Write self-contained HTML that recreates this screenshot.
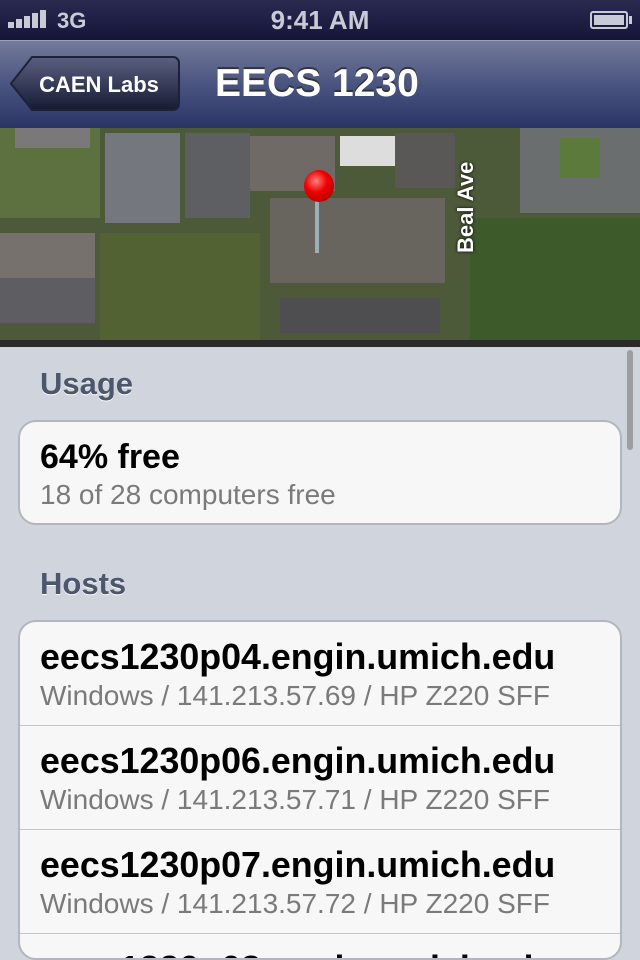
<!DOCTYPE html>
<html><head><meta charset="utf-8"><style>
*{margin:0;padding:0;box-sizing:border-box}
html,body{width:640px;height:960px;overflow:hidden}
body{background:#d0d4dc;font-family:"Liberation Sans",sans-serif;position:relative}
.status{position:absolute;top:0;left:0;width:640px;height:40px;background:linear-gradient(#2a2a50,#15153a);color:#c8cad6;font-weight:bold}
.nav{position:absolute;top:40px;left:0;width:640px;height:88px;background:linear-gradient(#737a9a,#4a5480 50%,#2a3566);border-top:1px solid #9aa0ba}
.back{position:absolute;left:10px;top:14px;width:170px;height:57px}
.title{position:absolute;left:215px;top:21px;color:#fff;font-size:39px;font-weight:bold;text-shadow:0 -2px 0 #333}
.map{position:absolute;top:128px;left:0;width:640px;height:219px;background:#4d5a3a;overflow:hidden}
.map div{position:absolute}
.sec{position:absolute;left:40px;font-size:31px;font-weight:bold;color:#4c566c;text-shadow:0 1px 0 #fff}
.card{position:absolute;left:18px;width:604px;background:#f7f7f7;border:2px solid #b3b6bd;border-radius:18px;overflow:hidden}
.row{height:104px;border-bottom:1px solid #c6c6c6;padding-left:20px}
.h{font-size:35.8px;font-weight:bold;color:#000;padding-top:15px}
.s{font-size:28px;color:#7a7a7a;margin-top:2px}
</style></head><body>
<div class="status">
 <div style="position:absolute;left:8px;top:12px;width:40px;height:16px">
  <div style="position:absolute;left:0;bottom:0;width:6px;height:6px;background:#c8cad6"></div>
  <div style="position:absolute;left:8px;bottom:0;width:6px;height:9px;background:#c8cad6"></div>
  <div style="position:absolute;left:16px;bottom:0;width:6px;height:12px;background:#c8cad6"></div>
  <div style="position:absolute;left:24px;bottom:0;width:6px;height:15px;background:#c8cad6"></div>
  <div style="position:absolute;left:32px;bottom:0;width:6px;height:18px;background:#c8cad6"></div>
 </div>
 <div style="position:absolute;left:57px;top:8px;font-size:22px">3G</div>
 <div style="position:absolute;left:0;width:640px;top:5px;text-align:center;font-size:26px">9:41 AM</div>
 <div style="position:absolute;left:590px;top:11px;width:38px;height:18px;border:2px solid #c8cad6;border-radius:3px;padding:2px"><div style="width:100%;height:100%;background:#c8cad6"></div></div>
 <div style="position:absolute;left:629px;top:16px;width:3px;height:8px;background:#c8cad6"></div>
</div>
<div class="nav">
 <svg class="back" viewBox="0 0 170 57"><defs><linearGradient id="g" x1="0" y1="0" x2="0" y2="1"><stop offset="0" stop-color="#5a6080"/><stop offset="1" stop-color="#161a33"/></linearGradient></defs><path d="M1 28.5 L22 2 H163 a6 6 0 0 1 6 6 V49 a6 6 0 0 1 -6 6 H22 Z" fill="url(#g)" stroke="#1e2238" stroke-width="2"/><text x="89" y="37" text-anchor="middle" fill="#fff" font-family="Liberation Sans" font-weight="bold" font-size="22">CAEN Labs</text></svg>
 <div class="title">EECS 1230</div>
</div>
<div class="map">
 <div style="left:0;top:0;width:100px;height:90px;background:#5c7040"></div>
 <div style="left:15px;top:0;width:75px;height:20px;background:#7a7878"></div>
 <div style="left:105px;top:5px;width:75px;height:90px;background:#74777e"></div>
 <div style="left:185px;top:5px;width:65px;height:85px;background:#5e5f63"></div>
 <div style="left:250px;top:8px;width:85px;height:55px;background:#6f6a66"></div>
 <div style="left:340px;top:8px;width:60px;height:30px;background:#ddd"></div>
 <div style="left:395px;top:5px;width:60px;height:55px;background:#5a5757"></div>
 <div style="left:0;top:105px;width:95px;height:55px;background:#77716e"></div>
 <div style="left:0;top:150px;width:95px;height:45px;background:#5d5d62"></div>
 <div style="left:270px;top:70px;width:175px;height:85px;background:#68655f"></div>
 <div style="left:280px;top:170px;width:160px;height:35px;background:#4e4d4f"></div>
 <div style="left:100px;top:105px;width:160px;height:110px;background:#526232"></div>
 <div style="left:470px;top:90px;width:170px;height:129px;background:#3d5a2b"></div>
 <div style="left:520px;top:0;width:120px;height:85px;background:#6b6e6e"></div>
 <div style="left:560px;top:10px;width:40px;height:40px;background:#5c7a3b"></div>
 <div style="left:0;top:212px;width:640px;height:7px;background:#2a2a2a"></div>
 <div style="left:315px;top:55px;width:4px;height:70px;background:#9ab0b8"></div>
 <div style="left:304px;top:42px;width:30px;height:32px;border-radius:50%;background:radial-gradient(circle at 40% 35%,#ff8080,#e00 40%,#900)"></div>
 <div style="left:453px;font-size:22px;color:#fff;font-weight:bold;transform:rotate(-90deg);transform-origin:left top;top:125px;text-shadow:0 0 3px #000">Beal Ave</div>
</div>
<div style="position:absolute;left:627px;top:350px;width:6px;height:100px;background:#888;border-radius:3px;opacity:.7"></div>
<div class="sec" style="top:366px">Usage</div>
<div class="card" style="top:420px;height:105px"><div style="padding-left:20px"><div class="h" style="padding-top:16px;font-size:34px">64% free</div><div class="s" style="margin-top:2px">18 of 28 computers free</div></div></div>
<div class="sec" style="top:566px">Hosts</div>
<div class="card" style="top:620px;height:340px">
 <div class="row"><div class="h">eecs1230p04.engin.umich.edu</div><div class="s">Windows / 141.213.57.69 / HP Z220 SFF</div></div>
 <div class="row"><div class="h">eecs1230p06.engin.umich.edu</div><div class="s">Windows / 141.213.57.71 / HP Z220 SFF</div></div>
 <div class="row"><div class="h">eecs1230p07.engin.umich.edu</div><div class="s">Windows / 141.213.57.72 / HP Z220 SFF</div></div>
 <div class="row"><div class="h">eecs1230p08.engin.umich.edu</div></div>
</div>
</body></html>
